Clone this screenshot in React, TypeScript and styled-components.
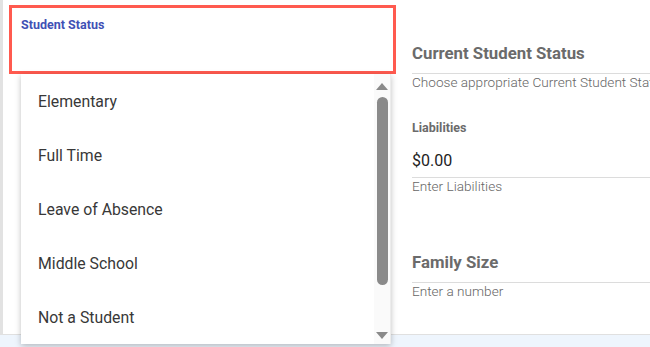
import React from "react";
import styled, { createGlobalStyle } from "styled-components";

const Global = createGlobalStyle`
  html, body { margin: 0; padding: 0; background: #fff; }
  body { font-family: Roboto, "Liberation Sans", Arial, sans-serif; overflow: hidden; }
  * { box-sizing: border-box; }
`;

const Page = styled.div`
  width: 650px;
  height: 347px;
  display: flex;
  flex-direction: column;
  overflow: hidden;
`;

const Main = styled.div`
  height: 335px;
  border-left: 3px solid #e2e2e2;
  border-bottom: 1px solid #e0e0e0;
  display: flex;
  background: #fff;
`;

const Footer = styled.div`
  flex: 1;
  background: #eef5fd;
`;

const LeftCol = styled.div`
  position: relative;
  width: 393px;
  padding: 5px 0 0 6px;
  flex-shrink: 0;
`;

const SelectBox = styled.div`
  width: 387px;
  height: 69px;
  border: 3px solid #ff5a4f;
  padding: 10px 0 0 9px;
`;

const SelectLabel = styled.div`
  font-size: 12.5px;
  font-weight: 700;
  color: #3f51b5;
  line-height: 14px;
`;

const Menu = styled.div`
  position: absolute;
  left: 18px;
  top: 74px;
  width: 370px;
  height: 270px;
  background: #fff;
  display: flex;
  box-shadow: 0 2px 6px rgba(0, 0, 0, 0.25);
  z-index: 2;
`;

const List = styled.ul`
  flex: 1;
  margin: 0;
  padding: 0;
  list-style: none;
`;

const Item = styled.li`
  height: 54px;
  display: flex;
  align-items: center;
  padding-left: 17px;
  font-size: 15.8px;
  color: #383838;
`;

const Scrollbar = styled.div`
  width: 17px;
  background: #fafafa;
  border-right: 1px solid #ececec;
  display: flex;
  flex-direction: column;
  align-items: center;
  padding: 9px 0 5px;
`;

const Arrow = styled.div<{ $down?: boolean }>`
  width: 0;
  height: 0;
  border-left: 6px solid transparent;
  border-right: 6px solid transparent;
  ${(p) =>
    p.$down
      ? "border-top: 7px solid #8a8a8a;"
      : "border-bottom: 7px solid #8a8a8a;"}
`;

const Thumb = styled.div`
  width: 11px;
  height: 188px;
  margin-top: 7px;
  border-radius: 6px;
  background: #8a8a8a;
`;

const Spacer = styled.div`
  flex: 1;
`;

const RightCol = styled.div`
  flex: 1;
  min-width: 0;
  padding-left: 16px;
  padding-top: 44px;
  display: flex;
  flex-direction: column;
  overflow: hidden;
`;

const Field = styled.div<{ $gap: number }>`
  margin-bottom: ${(p) => p.$gap}px;
`;

const Title = styled.div`
  font-size: 16.8px;
  font-weight: 700;
  color: #6b6b6b;
  line-height: 19px;
  height: 30px;
  border-bottom: 1px solid #dcdcdc;
  white-space: nowrap;
`;

const SmallLabel = styled.div`
  font-size: 12.5px;
  font-weight: 700;
  color: #6b6b6b;
  line-height: 14px;
  margin-bottom: 16px;
`;

const Value = styled.div`
  font-size: 16px;
  color: #222;
  line-height: 20px;
  height: 27px;
  border-bottom: 1px solid #dcdcdc;
`;

const Helper = styled.div`
  font-size: 13.6px;
  font-weight: 300;
  color: #666;
  line-height: 17px;
  white-space: nowrap;
`;

const items = [
  "Elementary",
  "Full Time",
  "Leave of Absence",
  "Middle School",
  "Not a Student",
];

export default function App() {
  return (
    <Page>
      <Global />
      <Main>
        <LeftCol>
          <SelectBox>
            <SelectLabel>Student Status</SelectLabel>
          </SelectBox>
          <Menu>
            <List>
              {items.map((i) => (
                <Item key={i}>{i}</Item>
              ))}
            </List>
            <Scrollbar>
              <Arrow />
              <Thumb />
              <Spacer />
              <Arrow $down />
            </Scrollbar>
          </Menu>
        </LeftCol>
        <RightCol>
          <Field $gap={30}>
            <Title>Current Student Status</Title>
            <Helper>Choose appropriate Current Student Status</Helper>
          </Field>
          <Field $gap={58}>
            <SmallLabel>Liabilities</SmallLabel>
            <Value>$0.00</Value>
            <Helper>Enter Liabilities</Helper>
          </Field>
          <Field $gap={0}>
            <Title>Family Size</Title>
            <Helper>Enter a number</Helper>
          </Field>
        </RightCol>
      </Main>
      <Footer />
    </Page>
  );
}
